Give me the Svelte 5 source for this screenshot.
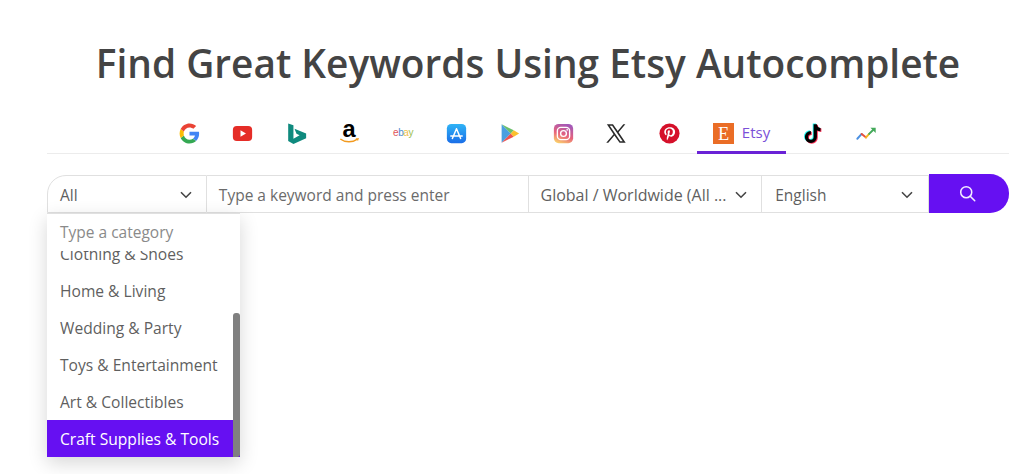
<script>
  const tabs = [
    "google", "youtube", "bing", "amazon", "ebay", "appstore", "play",
    "instagram", "x", "pinterest", "etsy", "tiktok", "trends",
  ];

  const categories = [
    "Clothing & Shoes",
    "Home & Living",
    "Wedding & Party",
    "Toys & Entertainment",
    "Art & Collectibles",
    "Craft Supplies & Tools",
  ];
</script>

{#snippet chevron()}
  <svg class="chevron" viewBox="0 0 12 8" width="12" height="8" fill="none" stroke="#444" stroke-width="1.6">
    <path d="M1 1.2l5 5 5-5" />
  </svg>
{/snippet}

{#snippet icon(name)}
  <svg class="logo" viewBox="0 0 24 24" width="21" height="21">
    {#if name === "google"}
      <path fill="#4285f4" d="M23 12.3c0-.9-.1-1.600-.2-2.300H12v4.400h6.200c-.3 1.400-1.100 2.600-2.300 3.400l3.600 2.800c2.100-2 3.500-4.900 3.500-8.300z" />
      <path fill="#34a853" d="M12 23.500c3.100 0 5.700-1 7.500-2.800l-3.600-2.800c-1 .7-2.300 1.100-3.900 1.100-3 0-5.500-2-6.400-4.800l-3.700 2.900c1.900 3.800 5.800 6.400 10.100 6.400z" />
      <path fill="#fbbc05" d="M5.600 14.200c-.5-1.400-.5-3 0-4.400L1.900 6.900c-1.600 3.100-1.600 7 0 10.200z" />
      <path fill="#ea4335" d="M12 5c1.700 0 3.200.6 4.400 1.700l3.200-3.200C17.600 1.600 15 .5 12 .5 7.700.5 3.800 3.100 1.900 6.900l3.700 2.900C6.500 7 9 5 12 5z" />
    {:else if name === "youtube"}
      <rect x="1" y="3.500" width="22" height="17" rx="4.500" fill="#e52d27" />
      <path fill="#fff" d="M9.700 8.300l6.300 3.700-6.300 3.700z" />
    {:else if name === "bing"}
      <path fill="#0f8a7e" d="M2.500.5l6 2v15.500l7-4-3.500-1.700-2.300-5.800L23 12v5.500L8.500 24l-6-3.300z" />
    {:else if name === "amazon"}
      <text x="11.500" y="16.500" text-anchor="middle" class="amazon">a</text>
      <path d="M1.500 18.300c5.500 4.300 14 4.300 19.500.2" fill="none" stroke="#f29a1f" stroke-width="1.700" />
      <path d="M19 17.600l3.800-.4-1.100 3.500z" fill="#f29a1f" />
    {:else if name === "ebay"}
      <text x="11.500" y="15" text-anchor="middle" class="ebay"><tspan fill="#e0555a">e</tspan><tspan fill="#4f8ad0">b</tspan><tspan fill="#f0c04a">a</tspan><tspan fill="#9cc050">y</tspan></text>
    {:else if name === "appstore"}
      <defs>
        <linearGradient id="appstore-fill" x1="0" y1="0" x2="0" y2="1">
          <stop offset="0" stop-color="#2fb4f6" />
          <stop offset="1" stop-color="#1a6ee8" />
        </linearGradient>
      </defs>
      <rect x="1" y="1" width="22" height="22" rx="5" fill="url(#appstore-fill)" />
      <path d="M12 6.500L7.300 17.800M12 6.500l4.700 11.300M5.500 14.800h13" stroke="#fff" stroke-width="1.700" stroke-linecap="round" fill="none" />
    {:else if name === "play"}
      <path fill="#4a9fe0" d="M3 1.500v21L13.500 12z" />
      <path fill="#6bbf6a" d="M3 1.500L13.500 12l3.400-3.600z" />
      <path fill="#ef5350" d="M3 22.500L13.500 12l3.400 3.600z" />
      <path fill="#fbc02d" d="M16.900 8.400L23 12l-6.100 3.600L13.500 12z" />
    {:else if name === "instagram"}
      <defs>
        <linearGradient id="insta-fill" x1="0.2" y1="1" x2="0.6" y2="0">
          <stop offset="0" stop-color="#fbd46b" />
          <stop offset="0.45" stop-color="#e8637a" />
          <stop offset="1" stop-color="#a358b8" />
        </linearGradient>
      </defs>
      <rect x="1" y="1" width="22" height="22" rx="5.500" fill="url(#insta-fill)" />
      <rect x="5" y="5" width="14" height="14" rx="4" fill="none" stroke="#fff" stroke-width="1.600" />
      <circle cx="12" cy="12" r="3.300" fill="none" stroke="#fff" stroke-width="1.600" />
      <circle cx="16.200" cy="7.800" r="1" fill="#fff" />
    {:else if name === "x"}
      <path fill="#2a2a2a" d="M1 1.500h7l5.400 7.600 6.400-7.600h2.300l-7.700 9 8.100 12h-7l-5.900-8.200-7 8.200H.3l8.300-9.700zm3.300 1.600l12 17.800h2.800L7 3.100z" />
    {:else if name === "pinterest"}
      <circle cx="12" cy="12" r="11.500" fill="#d5102a" />
      <path fill="#fff" d="M12.300 4.800c-4 0-6.300 2.700-6.300 5.500 0 1.400.8 3.100 1.900 3.600.3.100.4.100.5-.2l.3-1.100c0-.2 0-.3-.1-.4-.4-.5-.7-1.200-.7-2 0-2 1.600-3.800 4.100-3.800 2.200 0 3.800 1.500 3.800 3.500 0 2.400-1.200 4-2.700 4-.9 0-1.500-.7-1.300-1.600.3-1 .7-2.100.7-2.900 0-.7-.4-1.200-1.100-1.200-.9 0-1.600.9-1.600 2.200 0 .8.300 1.300.3 1.300l-1.100 4.500c-.2.900-.1 2.500 0 3.300l.4.100c.5-.7 1.200-2 1.500-2.900l.6-2.100c.3.600 1.200 1 2.100 1 2.800 0 4.800-2.600 4.800-5.700 0-3-2.500-5.100-5.900-5.100z" />
    {:else if name === "etsy"}
      <rect x="0" y="0" width="24" height="24" fill="#ea6d26" />
      <text x="12" y="19" text-anchor="middle" class="etsy-e">E</text>
    {:else if name === "tiktok"}
      <path d="M14 1.500v14.500a5 5 0 1 1-5-5M14 1.500c.3 3.500 2.800 5.800 6 6" fill="none" stroke="#25f4ee" stroke-width="3.800" transform="translate(-1 -.8)" />
      <path d="M14 1.500v14.500a5 5 0 1 1-5-5M14 1.500c.3 3.500 2.800 5.800 6 6" fill="none" stroke="#fe2c55" stroke-width="3.800" transform="translate(1 .8)" />
      <path d="M14 1.500v14.500a5 5 0 1 1-5-5M14 1.500c.3 3.500 2.800 5.800 6 6" fill="none" stroke="#000" stroke-width="3.800" />
    {:else if name === "trends"}
      <path d="M1.500 18l5-5.500" stroke="#4a90e2" stroke-width="2.200" fill="none" stroke-linecap="round" />
      <path d="M6.500 12.500l5 4" stroke="#e8503f" stroke-width="2.200" fill="none" stroke-linecap="round" />
      <path d="M11.500 16.500l3.500-4" stroke="#f5b921" stroke-width="2.200" fill="none" stroke-linecap="round" />
      <path d="M15 12.500l4.500-4.500" stroke="#43a95a" stroke-width="2.200" fill="none" stroke-linecap="round" />
      <path d="M16.500 5.500h6v6z" fill="#43a95a" />
    {/if}
  </svg>
{/snippet}

<main class="page">
  <h1>Find Great Keywords Using Etsy Autocomplete</h1>

  <nav class="tabs">
    {#each tabs as name}
      <div class="tab" class:active={name === "etsy"}>
        {@render icon(name)}
        {#if name === "etsy"}<span>Etsy</span>{/if}
      </div>
    {/each}
  </nav>

  <div class="search">
    <div class="cell category">
      <span>All</span>
      {@render chevron()}
      <div class="menu">
        <div class="filter">Type a category</div>
        <div class="options">
          <ul>
            {#each categories as item, i}
              <li class:selected={i === categories.length - 1}>{item}</li>
            {/each}
          </ul>
          <div class="thumb"></div>
        </div>
      </div>
    </div>
    <div class="cell keyword">Type a keyword and press enter</div>
    <div class="cell country">
      <span>Global / Worldwide (All ...</span>
      {@render chevron()}
    </div>
    <div class="cell language">
      <span>English</span>
      {@render chevron()}
    </div>
    <button class="go" aria-label="Search">
      <svg viewBox="0 0 20 20" width="17" height="17" fill="none" stroke="#f3ecff" stroke-width="1.800">
        <circle cx="8.500" cy="8.500" r="6.500" />
        <path d="M13.200 13.200l5.300 5.300" stroke-linecap="round" />
      </svg>
    </button>
  </div>
</main>

<style>
  :global(body) {
    background: #fff;
    font-family: "Open Sans", "Noto Sans", sans-serif;
    color: #555;
  }

  .page {
    height: 474px;
    box-sizing: border-box;
    padding: 38px 15px 0 47px;
    overflow: hidden;
  }

  h1 {
    margin: 0;
    font-size: 38.8px;
    line-height: 50px;
    font-weight: 600;
    color: #444;
    text-align: center;
  }

  .tabs {
    display: flex;
    justify-content: center;
    margin-top: 27px;
    border-bottom: 1px solid #ececec;
    height: 38px;
  }

  .tab {
    display: flex;
    align-items: center;
    gap: 8px;
    padding: 0 16.200px 3px;
    box-sizing: border-box;
    height: 39px;
  }

  .tab.active {
    color: #7a50d8;
    font-size: 15px;
    border-bottom: 3px solid #6a22d6;
    padding-bottom: 0;
  }

  .tab.active span {
    margin-bottom: 3px;
  }

  .logo {
    overflow: visible;
  }

  .amazon {
    font: 700 27px "Liberation Sans", sans-serif;
    fill: #000;
  }

  .ebay {
    font: 400 11.500px "Liberation Sans", sans-serif;
    letter-spacing: -0.5px;
  }

  .etsy-e {
    font: 400 21px "Liberation Serif", serif;
    fill: #fff;
  }

  .search {
    display: flex;
    height: 38px;
    margin-top: 21px;
    font-size: 15.5px;
  }

  .cell {
    display: flex;
    align-items: center;
    justify-content: space-between;
    box-sizing: border-box;
    padding: 1px 13px 0;
    border: 1px solid #e0e0e0;
    border-left: 0;
    background: #fff;
    color: #5f5f5f;
    white-space: nowrap;
  }

  .category {
    position: relative;
    width: 160px;
    border-left: 1px solid #e0e0e0;
    border-top-left-radius: 19px;
    padding: 1px 14px 0 12px;
  }

  .keyword {
    width: 322px;
    color: #6b6b6b;
    padding-left: 12px;
  }

  .country {
    width: 234px;
    padding: 1px 14px 0 12px;
    font-size: 16px;
  }

  .language {
    width: 167px;
    padding-right: 15px;
  }

  .go {
    width: 80px;
    height: 39px;
    margin-top: -1px;
    border: 0;
    padding: 0 3px 0 0;
    background: #6610f2;
    border-radius: 0 19px 19px 0;
    display: flex;
    align-items: center;
    justify-content: center;
  }

  .menu {
    position: absolute;
    left: -1px;
    top: 36.500px;
    width: 193px;
    height: 244px;
    box-sizing: border-box;
    background: #fff;
    border-top: 1px solid #e0e0e0;
    box-shadow: 0 6px 18px rgba(0, 0, 0, 0.16);
    display: flex;
    flex-direction: column;
    z-index: 2;
  }

  .filter {
    flex: none;
    height: 37px;
    padding: 7px 13px 0;
    box-sizing: border-box;
    color: #8a8a8a;
    background: #fff;
    line-height: 22px;
  }

  .options {
    position: relative;
    flex: 1;
    overflow: hidden;
    font-size: 15.6px;
  }

  ul {
    list-style: none;
    margin: -16px 0 0;
    padding: 0;
  }

  li {
    height: 37px;
    line-height: 38px;
    padding: 0 13px;
    color: #5f5f5f;
  }

  li.selected {
    background: #6610f2;
    color: #fff;
  }

  .thumb {
    position: absolute;
    right: 0;
    bottom: 0;
    width: 7px;
    height: 144px;
    background: #808080;
    border-radius: 3px 3px 3px 0;
  }
</style>
